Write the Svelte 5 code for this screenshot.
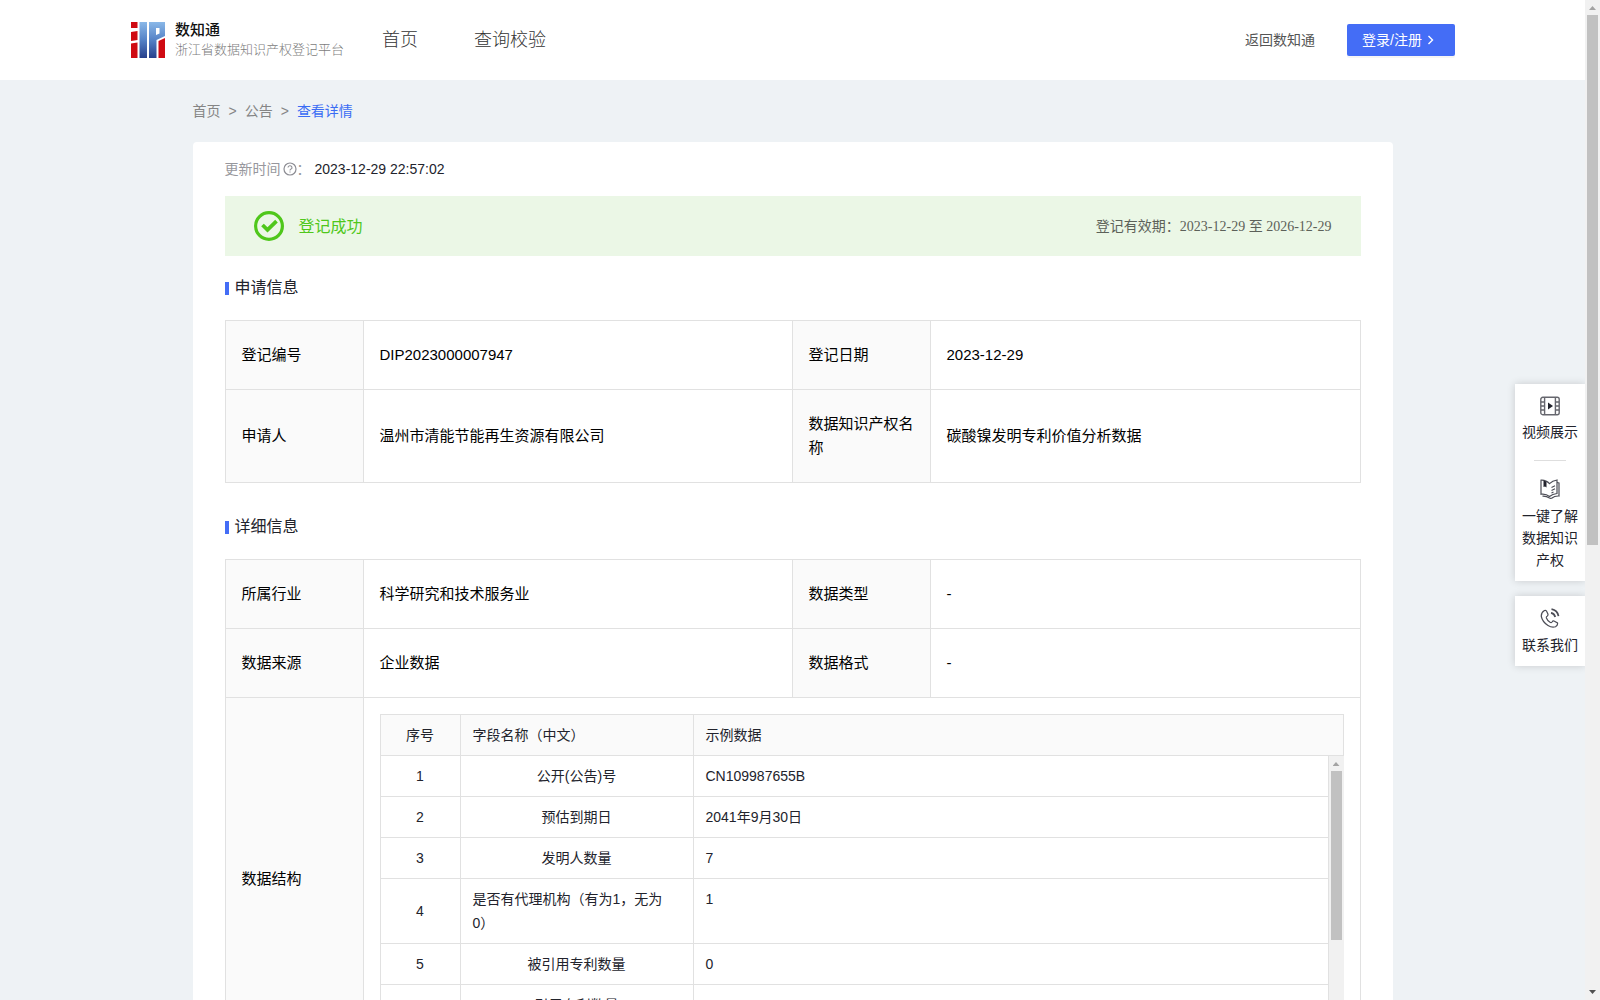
<script>
  const basic = [
    ['登记编号', 'DIP2023000007947', '登记日期', '2023-12-29'],
    ['申请人', '温州市清能节能再生资源有限公司', '数据知识产权名称', '碳酸镍发明专利价值分析数据'],
  ];
  const detail = [
    ['所属行业', '科学研究和技术服务业', '数据类型', '-'],
    ['数据来源', '企业数据', '数据格式', '-'],
  ];
  const fields = [
    ['公开(公告)号', 'CN109987655B'],
    ['预估到期日', '2041年9月30日'],
    ['发明人数量', '7'],
    ['是否有代理机构（有为1，无为0）', '1'],
    ['被引用专利数量', '0'],
    ['引用专利数量', '11'],
  ];
</script>

{#snippet infoRow(row)}
  <tr>
    <th scope="row">{row[0]}</th>
    <td>{row[1]}</td>
    <th scope="row">{row[2]}</th>
    <td>{row[3]}</td>
  </tr>
{/snippet}

{#snippet cols()}
  <colgroup>
    <col class="c-label" /><col class="c-value" /><col class="c-label" /><col />
  </colgroup>
{/snippet}

<div class="shell">
  <div class="page">
    <header>
      <a class="brand" href="#home">
        <svg width="34" height="36" viewBox="0 0 34 36" aria-hidden="true">
          <defs>
            <linearGradient id="blue" x1="0" y1="0" x2="0" y2="1">
              <stop offset="0" stop-color="#8ab8e8" />
              <stop offset="0.5" stop-color="#5582c6" />
              <stop offset="1" stop-color="#27408c" />
            </linearGradient>
          </defs>
          <path fill="#cf0a12" d="M0 0h6.500v6H0zM0 10l6.500-1v9L0 19zM0 21.500l6.500-1V36H0zM27.500 19l6.500-3v20h-6.500z" />
          <path fill="url(#blue)" d="M8.500 0H16v36H8.500zM18 0h16v14l-8.500 4v18H18zM25 6v7l3.500-1.500V6z" fill-rule="evenodd" />
        </svg>
        <span class="names">
          <strong>数知通</strong>
          <small>浙江省数据知识产权登记平台</small>
        </span>
      </a>
      <nav>
        <a href="#home">首页</a>
        <a href="#verify">查询校验</a>
      </nav>
      <a class="back" href="#back">返回数知通</a>
      <button class="login" type="button">
        <span>登录/注册</span>
        <svg width="12" height="12" viewBox="0 0 12 12" aria-hidden="true">
          <path d="M3.500 2l4 4-4 4" fill="none" stroke="#fff" stroke-width="1.400" />
        </svg>
      </button>
    </header>

    <main>
      <nav class="crumbs" aria-label="breadcrumb">
        <a href="#home">首页</a><span>&gt;</span><a href="#notice">公告</a><span>&gt;</span><a class="here" href="#detail">查看详情</a>
      </nav>

      <section class="card">
        <p class="updated">
          <span>更新时间</span>
          <svg width="14" height="14" viewBox="0 0 14 14" aria-hidden="true">
            <circle cx="7" cy="7" r="6" fill="none" stroke="#8c8c93" stroke-width="1.2" />
            <path d="M5 5.6a2 1.8 0 1 1 2.7 1.7q-.7.3-.7 1.2M7 9.4v1.2" fill="none" stroke="#8c8c93" stroke-width="1.1" />
          </svg>
          <span>：</span>
          <time>2023-12-29 22:57:02</time>
        </p>

        <div class="status">
          <svg width="30" height="30" viewBox="0 0 30 30" aria-hidden="true">
            <circle cx="15" cy="15" r="13.4" fill="none" stroke="#4fc71b" stroke-width="3.2" />
            <path d="M8.500 14l5 4.800 9-8.600" fill="none" stroke="#4fc71b" stroke-width="3.800" />
          </svg>
          <span class="ok">登记成功</span>
          <span class="valid">登记有效期：2023-12-29 至 2026-12-29</span>
        </div>

        <h2>申请信息</h2>
        <table class="info">
          {@render cols()}
          <tbody>
            {#each basic as row}{@render infoRow(row)}{/each}
          </tbody>
        </table>

        <h2 class="second">详细信息</h2>
        <table class="info">
          {@render cols()}
          <tbody>
            {#each detail as row}{@render infoRow(row)}{/each}
            <tr>
              <th scope="row">数据结构</th>
              <td class="holder" colspan="3">
                <div class="grid">
                  <div class="ghead">
                    <span class="num">序号</span>
                    <span>字段名称（中文）</span>
                    <span>示例数据</span>
                  </div>
                  <div class="gbody">
                    <div class="scroll">
                      <table class="fields">
                        <colgroup><col class="c-num" /><col class="c-name" /><col /></colgroup>
                        <tbody>
                          {#each fields as field, i}
                            <tr>
                              <td class="num">{i + 1}</td>
                              <td class="name"><span>{field[0]}</span></td>
                              <td>{field[1]}</td>
                            </tr>
                          {/each}
                        </tbody>
                      </table>
                    </div>
                    <div class="bar inner" aria-hidden="true">
                      <i class="up"></i><b></b><i class="down"></i>
                    </div>
                  </div>
                </div>
              </td>
            </tr>
          </tbody>
        </table>
      </section>
    </main>

    <aside>
      <div class="panel">
        <a href="#video">
          <svg width="20" height="20" viewBox="0 0 20 20" aria-hidden="true">
            <g fill="none" stroke="#66676e" stroke-width="1.400">
              <rect x="0.8" y="1.3" width="18.4" height="17.400" rx="2" />
              <path d="M4.600 1.500v17M15.400 1.500v17M1 6h3.600M1 10h3.600M1 14h3.600M15.400 6H19M15.400 10H19M15.400 14H19" />
            </g>
            <path fill="#22232c" d="M8 6.600v6.800l5-3.400z" />
          </svg>
          <span>视频展示</span>
        </a>
        <hr />
        <a class="tall" href="#about">
          <svg width="20" height="20" viewBox="0 0 20 20" aria-hidden="true">
            <g fill="none" stroke="#4c4d56" stroke-width="1.200">
              <path d="M1 1.200q5-.4 8.500 3.500 3-3 7.500-3.700v13.500q-4.500.5-7.500 3-3.500-3-8.500-2.300z" />
              <path d="M17 3.500l2 .5v13q-4.500-.2-7 2-1.200.8-2.500 0-3-2-7-1.800M11.500 8.500l3.500-1.700M11.500 11.500l3.500-1.700M11.500 14l2-1" />
            </g>
            <path fill="#22232c" d="M3.500 1.500l3 1v6l-1.500-1-1.500.500z" />
          </svg>
          <span>一键了解数据知识产权</span>
        </a>
      </div>
      <div class="panel">
        <a class="tall" href="#contact">
          <svg width="20" height="20" viewBox="0 0 20 20" aria-hidden="true">
            <g fill="none" stroke="#4c4d56" stroke-width="1.200">
              <path d="M4.500 2.500Q1 4.500 1.300 8.500 2.500 14 8 17.500q4 2.500 7.500 1.200 2.500-1.500 2-3.700l-3.500-2q-1.200-.3-2 1-.8 1-2 .3-2.500-1.500-3.600-4.300-.3-1.200.7-1.800 1.200-.8.800-2.200L6.500 3q-.8-1-2-.5z" />
              <path stroke-width="1.700" d="M11 4.800q3.500.6 4.200 4.200M11.500 1.200q6 1 7 7" />
            </g>
          </svg>
          <span>联系我们</span>
        </a>
      </div>
    </aside>
  </div>

  <div class="bar outer" aria-hidden="true">
    <i class="up"></i><b></b><i class="down"></i>
  </div>
</div>

<style>
  :global(body) {
    font-family: 'Liberation Sans', 'Noto Sans CJK SC', sans-serif;
    font-size: 14px;
    color: #22232c;
  }
  .shell {
    display: grid;
    grid-template-columns: minmax(0, 1fr) 15px;
    height: 100vh;
    overflow: hidden;
  }
  .page {
    position: relative;
    background: #eef2f5;
    overflow: hidden;
  }
  a {
    color: inherit;
    text-decoration: none;
  }
  svg {
    display: block;
    flex: none;
  }

  header {
    display: flex;
    align-items: center;
    height: 80px;
    padding: 0 130px 0 131px;
    background: #fff;
    font-weight: 300;
  }
  .brand {
    display: flex;
    align-items: center;
    gap: 10px;
    width: 251px;
    white-space: nowrap;
  }
  .names {
    display: flex;
    flex-direction: column;
  }
  .names strong {
    font-size: 15px;
    line-height: 20px;
    font-weight: 500;
    color: #111;
  }
  .names small {
    font-size: 13px;
    line-height: 20px;
    color: #7c7c7c;
  }
  header nav {
    display: flex;
    gap: 56px;
    flex: 1;
    padding-bottom: 4px;
    font-size: 18px;
    color: #333;
  }
  .back {
    margin-right: 32px;
    padding-bottom: 2px;
    font-weight: 400;
    color: #555;
  }
  .login {
    display: flex;
    align-items: center;
    gap: 3px;
    width: 108px;
    height: 32px;
    padding: 0 15px;
    border: 0;
    border-radius: 2px;
    background: #446df6;
    box-shadow: 0 2px 0 rgba(0, 0, 0, 0.04);
    font: inherit;
    font-weight: 400;
    color: #fff;
    white-space: nowrap;
  }
  .login span {
    padding-bottom: 2px;
  }

  main {
    max-width: 1200px;
    margin: 0 auto;
  }
  .crumbs {
    display: flex;
    gap: 8px;
    padding: 20px 0;
    line-height: 22px;
    color: #858585;
  }
  .crumbs .here {
    color: #3a6cf4;
  }

  .card {
    padding: 16px 32px 32px;
    border-radius: 4px;
    background: #fff;
  }
  .updated {
    display: flex;
    align-items: center;
    margin: 0 0 16px;
    line-height: 22px;
    color: #97979d;
  }
  .updated svg {
    margin-left: 2px;
  }
  .updated time {
    margin-left: 4px;
    color: #22232c;
  }
  .status {
    display: flex;
    align-items: center;
    height: 60px;
    padding: 0 29px;
    background: #ebf7e6;
  }
  .ok {
    margin-left: 15px;
    padding-bottom: 3px;
    font-size: 16px;
    color: #4fc71b;
  }
  .valid {
    margin-left: auto;
    padding-bottom: 3px;
    font-family: 'Liberation Serif', 'Noto Sans CJK SC', serif;
    color: #5c6159;
  }

  h2 {
    display: flex;
    align-items: center;
    gap: 6px;
    margin: 20px 0;
    font-size: 16px;
    line-height: 24px;
    font-weight: 400;
  }
  h2::before {
    content: '';
    width: 4px;
    height: 13px;
    background: #446df6;
  }
  h2.second {
    margin-top: 32px;
  }

  .info {
    width: 100%;
    table-layout: fixed;
    border-collapse: collapse;
    font-size: 15px;
    line-height: 24px;
    color: #000;
  }
  .c-label {
    width: 138px;
  }
  .c-value {
    width: 429px;
  }
  .info th,
  .info td {
    padding: 22px 15px 22px 16px;
    border: 1px solid #e1e1e1;
    text-align: left;
    font-weight: 400;
  }
  .info th {
    background: #fafafa;
  }
  .info .holder {
    padding: 16px;
  }

  .grid {
    font-size: 14px;
    color: #22232c;
  }
  .ghead {
    display: grid;
    grid-template-columns: 79px 232px 1fr;
    gap: 1px;
    border: 1px solid #e1e1e1;
    background: #e1e1e1;
  }
  .ghead span {
    padding: 8px 12px;
    background: #fafafa;
  }
  .ghead .num {
    text-align: center;
  }
  .gbody {
    display: grid;
    grid-template-columns: minmax(0, 1fr) 15px;
    height: 288px;
  }
  .scroll {
    overflow: hidden;
  }
  .fields {
    width: 100%;
    table-layout: fixed;
    border-collapse: separate;
    border-spacing: 0;
  }
  .c-num {
    width: 81px;
  }
  .c-name {
    width: 233px;
  }
  .info .fields td {
    padding: 8px 12px;
    border-width: 0 1px 1px 0;
    vertical-align: top;
  }
  .info .fields .num {
    border-left-width: 1px;
    text-align: center;
    vertical-align: middle;
  }
  .info .fields .name {
    text-align: center;
  }
  .info .fields .name:has(span) {
    padding-right: 12px;
  }
  .name span {
    display: inline-block;
    box-sizing: border-box;
    max-width: 100%;
    text-align: left;
    vertical-align: top;
    line-break: loose;
  }
  .fields tr:nth-child(4) .name span {
    padding-right: 12px;
  }

  .bar {
    display: flex;
    flex-direction: column;
    align-items: center;
    background: #f1f1f1;
  }
  .bar b {
    width: 11px;
    background: #c1c1c1;
  }
  .bar.outer b {
    height: 53%;
  }
  .bar.inner b {
    height: 169px;
  }
  .bar i {
    width: 7px;
    height: 15px;
    background: #505050;
  }
  .bar .up {
    clip-path: polygon(0 10px, 50% 6px, 100% 10px);
    background: #a3a3a3;
  }
  .bar .down {
    margin-top: auto;
    clip-path: polygon(0 5px, 100% 5px, 50% 9px);
  }

  aside {
    position: absolute;
    top: 384px;
    right: 0;
    display: grid;
    gap: 15px;
    width: 70px;
  }
  .panel {
    padding: 12px 7px 10px;
    background: #fff;
    box-shadow: 0 0 8px rgba(0, 0, 0, 0.16);
    text-align: center;
    line-height: 22px;
  }
  .panel a {
    display: grid;
    justify-items: center;
    gap: 5px;
  }
  .panel .tall {
    gap: 6px;
  }
  .panel hr {
    width: 32px;
    height: 1px;
    margin: 17px auto 18px;
    border: 0;
    background: #dedede;
  }
</style>
